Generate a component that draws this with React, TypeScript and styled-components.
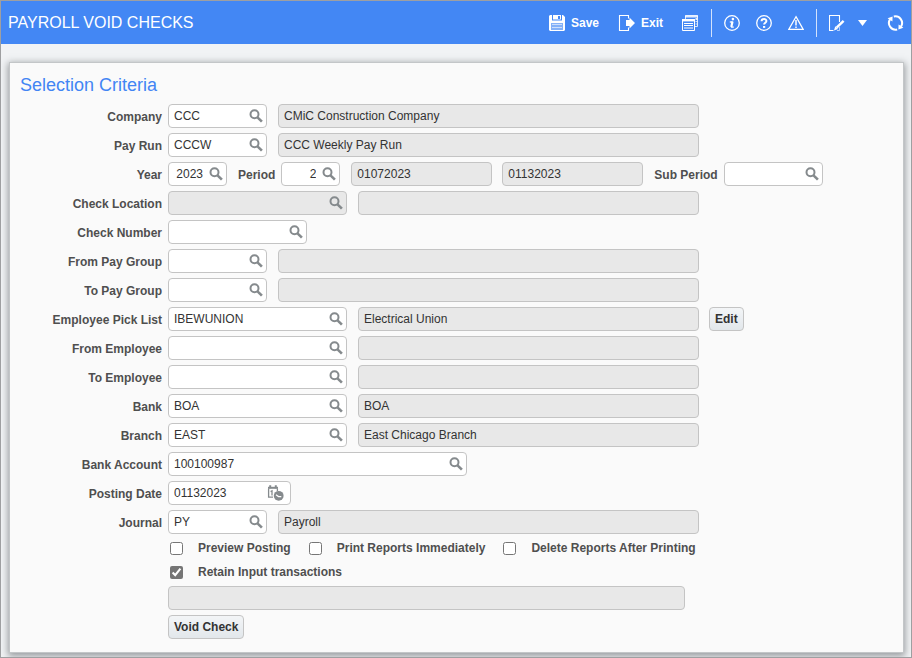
import React, { useId } from "react";
import styled, { createGlobalStyle } from "styled-components";

const GlobalStyle = createGlobalStyle`
  *, *::before, *::after { box-sizing: border-box; }
  body { margin: 0; }
  body, button, input { font-family: "Liberation Sans", Arial, sans-serif; font-size: 12px; }
`;

const Frame = styled.div`
  display: flex;
  flex-direction: column;
  min-height: 100vh;
  border: 1px solid #9e9fa1;
  background: #f1f3f5;
  color: #333;
  overflow: hidden;
`;

const Header = styled.header`
  display: flex;
  align-items: center;
  justify-content: space-between;
  height: 43px;
  flex: none;
  padding: 0 7px;
  background: #4387f4;
  color: #fff;
`;

const Title = styled.h1`
  margin: 0;
  font-size: 16px;
  line-height: 20px;
  font-weight: 400;
`;

const Toolbar = styled.nav`
  display: flex;
  align-items: center;
`;

const ToolGroup = styled.div<{ $gap: number }>`
  display: flex;
  align-items: center;
  gap: ${(p) => p.$gap}px;
`;

const ToolButton = styled.button`
  display: flex;
  align-items: center;
  gap: 6px;
  padding: 0;
  border: 0;
  background: none;
  color: inherit;
  font-weight: 700;
  cursor: pointer;
  svg { display: block; flex: none; }
`;

const Divider = styled.span<{ $before: number; $after: number }>`
  width: 1px;
  height: 28px;
  margin: 0 ${(p) => p.$after}px 0 ${(p) => p.$before}px;
  background: #d3e2fc;
`;

const Panel = styled.main`
  flex: 1;
  margin: 18px 7px 4px 8px;
  padding: 12px 10px 13px;
  border: 1px solid #c3c6c8;
  background: #fafafa;
  box-shadow: 0 2px 7px 1px rgba(60, 66, 70, 0.5);
`;

const SectionTitle = styled.h2`
  margin: 0 0 9px;
  font-size: 18px;
  line-height: 20px;
  font-weight: 400;
  color: #4285f4;
`;

const Form = styled.form`
  display: flex;
  flex-direction: column;
  gap: 5px;
`;

const Row = styled.div`
  display: flex;
  align-items: center;
  gap: 11px;
`;

const Indented = styled.div`
  display: flex;
  margin-left: 148px;
`;

const Pair = styled.div`
  display: flex;
  align-items: center;
  gap: 6px;
`;

const Group = styled.div`
  display: flex;
  align-items: center;
  gap: 10px;
`;

const Label = styled.label<{ $lead?: boolean }>`
  width: ${(p) => (p.$lead ? "142px" : "auto")};
  padding-top: 2px;
  text-align: right;
  line-height: 16px;
  font-weight: 700;
  color: #4f4f4f;
  white-space: nowrap;
`;

const Box = styled.div<{ $width: number; $disabled?: boolean }>`
  display: flex;
  align-items: center;
  width: ${(p) => p.$width}px;
  height: 24px;
  padding: 0 3px 0 5px;
  border: 1px solid #c4c4c4;
  border-radius: 4px;
  background: ${(p) => (p.$disabled ? "#e8e8e8" : "#fff")};
`;

const TextInput = styled.input<{ $right?: boolean }>`
  flex: 1;
  min-width: 0;
  height: 22px;
  padding: 0 6px 0 0;
  border: 0;
  outline: 0;
  background: transparent;
  color: #333;
  text-align: ${(p) => (p.$right ? "right" : "left")};
`;

const IconButton = styled.button`
  display: flex;
  padding: 0;
  border: 0;
  background: none;
  color: #858a8d;
  cursor: pointer;
`;

const ReadOnly = styled.input<{ $width: number }>`
  width: ${(p) => p.$width}px;
  height: 24px;
  padding: 0 5px;
  border: 1px solid #c4c4c4;
  border-radius: 4px;
  outline: 0;
  background: #e8e8e8;
  color: #333;
`;

const PushButton = styled.button`
  height: 24px;
  padding: 0 5px;
  border: 1px solid #c4c4c4;
  border-radius: 4px;
  background: linear-gradient(#f3f5f7, #e2e7eb);
  color: #333;
  font-weight: 700;
  cursor: pointer;
`;

const Checks = styled.div`
  display: flex;
  flex-direction: column;
  gap: 8px;
  margin: 1px 0 1px 150px;
`;

const CheckLine = styled.div`
  display: flex;
  gap: 18px;
`;

const CheckLabel = styled.label`
  display: flex;
  align-items: center;
  gap: 15px;
  line-height: 16px;
  font-weight: 700;
  color: #4f4f4f;
  white-space: nowrap;
  input {
    width: 13px;
    height: 13px;
    margin: 0;
    accent-color: #757575;
  }
`;

const SearchIcon = () => (
  <svg width="14" height="14" viewBox="0 0 14 14" fill="none" stroke="currentColor">
    <circle cx="5.5" cy="5.3" r="4" strokeWidth="2" />
    <path d="M8.5 8.3 12.9 12.7" strokeWidth="2.6" />
  </svg>
);

const CalendarIcon = () => (
  <svg width="20" height="17" viewBox="0 0 20 17" fill="none" stroke="currentColor">
    <path d="M6 12.2H1.6V3.5M10.4 3.5V6" strokeWidth="1.3" />
    <path d="M1 2.8h10" strokeWidth="2" />
    <path d="M3.2.3v3M8.8.3v3" strokeWidth="2" />
    <path d="M3.6 6.6 5 5.8V10.5" strokeWidth="1.3" />
    <circle cx="11.7" cy="10.8" r="4.9" fill="currentColor" stroke="none" />
    <path d="M9 9.8 11.5 11.6h2.8" stroke="#fff" strokeWidth="1.2" />
  </svg>
);

const SaveIcon = () => (
  <svg width="16" height="16" viewBox="0 0 16 16">
    <path fill="#fff" fillRule="evenodd" d="M1 0h2v5.5h10V0h1l2 2v13l-1 1H1l-1-1V1zM2 8v7h12V8z" />
    <path fill="#fff" fillRule="evenodd" d="M4 0h8v4.5H4zM9 1v3h2V1z" />
    <path fill="#fff" opacity=".35" d="M2 8h12v7H2z" />
    <path stroke="#fff" opacity=".6" d="M3 9.5h10M3 12.5h10" />
  </svg>
);

const ExitIcon = () => (
  <svg width="17" height="16" viewBox="-1 0 17 16" fill="none">
    <path d="M9.5 3.5V.5H.5v15h9v-3" stroke="#fff" strokeWidth="1.1" />
    <path d="M7 5h3.5V2.5L16 8l-5.5 5.5V11H7z" fill="#fff" />
  </svg>
);

const StackIcon = () => (
  <svg width="16" height="16" viewBox="0 0 16 16" fill="none" stroke="#fff">
    <path d="M3.5 4V.5h12v11H13" opacity=".8" />
    <path d="M3 1.5h13M13.5 4h2" strokeWidth="2" opacity=".85" />
    <path d="M13.5 6.5h2M13.5 9h2" opacity=".7" />
    <path d="M.5 4.5h12v11H.5z" />
    <path d="M0 5.2h13" strokeWidth="2.4" />
    <path d="M2 8.5h9M2 10.5h9M2 13h9" />
  </svg>
);

const InfoIcon = () => (
  <svg width="16" height="16" viewBox="0 0 16 16" fill="none" stroke="#fff">
    <circle cx="8" cy="8" r="7.3" strokeWidth="1.3" />
    <circle cx="8.9" cy="4.1" r="1.3" fill="#fff" stroke="none" />
    <path d="M5.8 7h2.9" strokeWidth="1.3" />
    <path d="M8.5 6.6 7.3 12" strokeWidth="2.2" />
    <path d="M7 12.1h2.8" strokeWidth="1.2" />
  </svg>
);

const HelpIcon = () => (
  <svg width="16" height="16" viewBox="0 0 16 16" fill="none" stroke="#fff">
    <circle cx="8" cy="8" r="7.3" strokeWidth="1.3" />
    <path d="M5.6 6.2C5.6 3.4 10.4 3.4 10.4 6c0 1.7-2.3 1.7-2.3 3.6" strokeWidth="2" />
    <path d="M7 11h2.2v1.9H7z" fill="#fff" stroke="none" />
  </svg>
);

const WarningIcon = () => (
  <svg width="16" height="16" viewBox="0 0 16 16" fill="none" stroke="#fff">
    <path d="M8 1.6 15.2 14.4H.8z" strokeWidth="1.2" />
    <path d="M8 5v5.5M8 11.5v1.6" strokeWidth="1.5" />
  </svg>
);

const NoteIcon = () => (
  <svg width="16" height="16" viewBox="0 0 16 16" fill="none" stroke="#fff">
    <path d="M10.5 7V.5H.5v15h4" strokeWidth="1.1" />
    <path d="M10.5 12v3.5H8" opacity=".6" />
    <path d="M14.6 5.8 7.6 12.6" strokeWidth="2.4" />
    <path d="M6.3 11.3 5 15.4l4-1.4z" fill="#fff" stroke="none" />
  </svg>
);

const CaretIcon = () => (
  <svg width="9" height="6" viewBox="0 0 9 6">
    <path d="M0 0h9L4.5 6z" fill="#fff" />
  </svg>
);

const RefreshIcon = () => (
  <svg width="17" height="16" viewBox="0 0 17 16" fill="none" stroke="#fff" strokeWidth="2">
    <path d="M6.8 1.5A6.7 6.7 0 0 1 14 11.6" />
    <path d="M10.2 14.5A6.7 6.7 0 0 1 3 4.4" />
    <path d="M.6 3.2 5.6 1.4 5.4 6.4zM16.4 12.8l-5 1.8.2-5z" fill="#fff" stroke="none" />
  </svg>
);

interface FieldProps {
  label: string;
  value?: string;
  width: number;
  lead?: boolean;
  right?: boolean;
  disabled?: boolean;
  date?: boolean;
}

function Field({ label, value = "", width, lead = true, right, disabled, date }: FieldProps) {
  const id = useId();
  return (
    <Pair>
      <Label htmlFor={id} $lead={lead}>{label}</Label>
      <Box $width={width} $disabled={disabled}>
        <TextInput id={id} defaultValue={value} disabled={disabled} $right={right} />
        <IconButton type="button" disabled={disabled} aria-label={date ? "Choose date" : `Search ${label}`}>
          {date ? <CalendarIcon /> : <SearchIcon />}
        </IconButton>
      </Box>
    </Pair>
  );
}

interface LookupProps extends FieldProps {
  text?: string;
  textWidth: number;
}

const LookupRow = ({ text = "", textWidth, ...field }: LookupProps) => (
  <Row>
    <Field {...field} />
    <ReadOnly readOnly value={text} $width={textWidth} aria-label={`${field.label} description`} />
  </Row>
);

const Check = ({ label, checked }: { label: string; checked?: boolean }) => (
  <CheckLabel>
    <input type="checkbox" defaultChecked={checked} />
    {label}
  </CheckLabel>
);

export default function App() {
  return (
    <Frame>
      <GlobalStyle />
      <Header>
        <Title>PAYROLL VOID CHECKS</Title>
        <Toolbar aria-label="Page actions">
          <ToolGroup $gap={19}>
            <ToolButton type="button"><SaveIcon />Save</ToolButton>
            <ToolButton type="button"><ExitIcon />Exit</ToolButton>
            <ToolButton type="button" aria-label="Windows"><StackIcon /></ToolButton>
          </ToolGroup>
          <Divider $before={13} $after={12} />
          <ToolGroup $gap={16}>
            <ToolButton type="button" aria-label="Information"><InfoIcon /></ToolButton>
            <ToolButton type="button" aria-label="Help"><HelpIcon /></ToolButton>
            <ToolButton type="button" aria-label="Warnings"><WarningIcon /></ToolButton>
          </ToolGroup>
          <Divider $before={12} $after={12} />
          <ToolGroup $gap={20}>
            <ToolGroup $gap={13}>
              <ToolButton type="button" aria-label="Edit notes"><NoteIcon /></ToolButton>
              <ToolButton type="button" aria-label="More"><CaretIcon /></ToolButton>
            </ToolGroup>
            <ToolButton type="button" aria-label="Refresh"><RefreshIcon /></ToolButton>
          </ToolGroup>
        </Toolbar>
      </Header>
      <Panel>
        <SectionTitle>Selection Criteria</SectionTitle>
        <Form onSubmit={(e) => e.preventDefault()}>
          <LookupRow label="Company" value="CCC" width={99} text="CMiC Construction Company" textWidth={421} />
          <LookupRow label="Pay Run" value="CCCW" width={99} text="CCC Weekly Pay Run" textWidth={421} />
          <Row>
            <Field label="Year" value="2023" width={59} right />
            <Field label="Period" value="2" width={59} lead={false} right />
            <Group>
              <ReadOnly readOnly value="01072023" $width={141} aria-label="Period start" />
              <ReadOnly readOnly value="01132023" $width={141} aria-label="Period end" />
            </Group>
            <Field label="Sub Period" width={99} lead={false} />
          </Row>
          <LookupRow label="Check Location" width={179} disabled textWidth={341} />
          <Field label="Check Number" width={139} />
          <LookupRow label="From Pay Group" width={99} textWidth={421} />
          <LookupRow label="To Pay Group" width={99} textWidth={421} />
          <Group>
            <LookupRow label="Employee Pick List" value="IBEWUNION" width={179} text="Electrical Union" textWidth={341} />
            <PushButton type="button">Edit</PushButton>
          </Group>
          <LookupRow label="From Employee" width={179} textWidth={341} />
          <LookupRow label="To Employee" width={179} textWidth={341} />
          <LookupRow label="Bank" value="BOA" width={179} text="BOA" textWidth={341} />
          <LookupRow label="Branch" value="EAST" width={179} text="East Chicago Branch" textWidth={341} />
          <Field label="Bank Account" value="100100987" width={299} />
          <Field label="Posting Date" value="01132023" width={123} date />
          <LookupRow label="Journal" value="PY" width={99} text="Payroll" textWidth={421} />
          <Checks>
            <CheckLine>
              <Check label="Preview Posting" />
              <Check label="Print Reports Immediately" />
              <Check label="Delete Reports After Printing" />
            </CheckLine>
            <CheckLine>
              <Check label="Retain Input transactions" checked />
            </CheckLine>
          </Checks>
          <Indented>
            <ReadOnly readOnly value="" $width={517} aria-label="Status message" />
          </Indented>
          <Indented>
            <PushButton type="submit">Void Check</PushButton>
          </Indented>
        </Form>
      </Panel>
    </Frame>
  );
}
